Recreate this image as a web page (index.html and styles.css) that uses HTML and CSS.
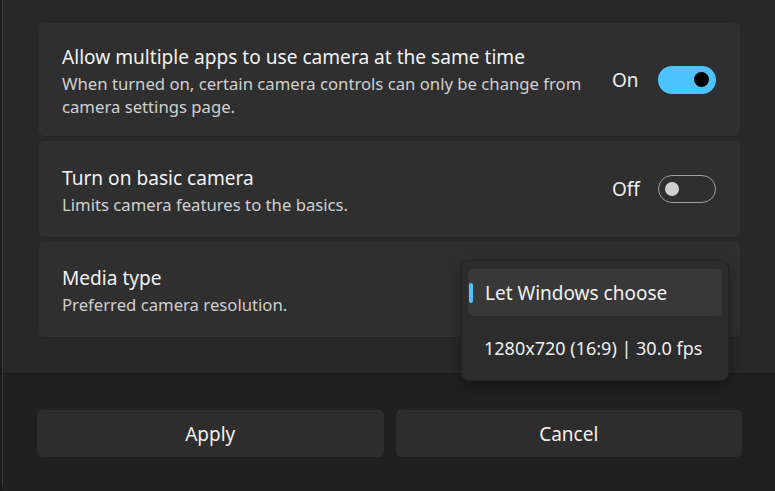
FILE: index.html
```html
<!DOCTYPE html>
<html>
<head>
<meta charset="utf-8">
<link rel="stylesheet" href="styles.css">
</head>
<body>
<div class="dialog">
  <div class="content">
    <div class="card card-tall">
      <div class="text">
        <div class="title">Allow multiple apps to use camera at the same time</div>
        <div class="desc">When turned on, certain camera controls can only be change from<br>camera settings page.</div>
      </div>
      <div class="control">
        <span class="state">On</span>
        <span class="toggle on"><span class="knob"></span></span>
      </div>
    </div>
    <div class="card">
      <div class="text">
        <div class="title">Turn on basic camera</div>
        <div class="desc">Limits camera features to the basics.</div>
      </div>
      <div class="control">
        <span class="state">Off</span>
        <span class="toggle off"><span class="knob"></span></span>
      </div>
    </div>
    <div class="card media">
      <div class="text">
        <div class="title">Media type</div>
        <div class="desc">Preferred camera resolution.</div>
      </div>
      <div class="menu">
        <div class="item selected"><span class="indicator"></span>Let Windows choose</div>
        <div class="item small">1280x720 (16:9) | 30.0 fps</div>
      </div>
    </div>
  </div>
  <div class="footer">
    <button class="btn">Apply</button>
    <button class="btn">Cancel</button>
  </div>
</div>
</body>
</html>
```
FILE: styles.css
```css
html, body {
  margin: 0;
  padding: 0;
  height: 100%;
}
body {
  background: #1b1b1b;
  font-family: "Noto Sans", "Open Sans", sans-serif;
  color: #ffffff;
  overflow: hidden;
}
.dialog {
  margin-left: 2px;
  height: 491px;
  border-left: 1px solid #3a3a3a;
  border-bottom-left-radius: 6px;
  display: flex;
  flex-direction: column;
  background: #202020;
}
.content {
  height: 374px;
  box-sizing: border-box;
  padding: 23px 35px 0 36px;
  background: #282828;
  border-bottom: 1px solid #1a1a1a;
  display: flex;
  flex-direction: column;
  gap: 4px;
}
.card {
  background: #2f2f2f;
  border-radius: 5px;
  height: 97px;
  box-sizing: border-box;
  padding: 0 24px 0 23px;
  display: flex;
  align-items: center;
  justify-content: space-between;
  border-bottom: 1px solid #242424;
  position: relative;
}
.card-tall {
  height: 114px;
}
.media {
  height: 96px;
}
.text {
  padding-top: 2px;
}
.title {
  font-size: 19.1px;
  line-height: 26px;
  color: #f2f2f2;
}
.desc {
  margin-top: 2px;
  font-size: 16.7px;
  line-height: 23px;
  color: #cfcfcf;
}
.control {
  display: flex;
  align-items: center;
  gap: 20px;
}
.state {
  font-size: 19px;
  color: #f0f0f0;
  width: 26px;
}
.toggle {
  width: 58px;
  height: 28px;
  box-sizing: border-box;
  border-radius: 14px;
  display: flex;
  align-items: center;
}
.toggle.on {
  background: #4cc2ff;
  justify-content: flex-end;
  padding-right: 7px;
}
.toggle.on .knob {
  width: 15px;
  height: 15px;
  border-radius: 50%;
  background: #000;
}
.toggle.off {
  border: 1.5px solid #9e9e9e;
  padding-left: 6px;
}
.toggle.off .knob {
  width: 14px;
  height: 14px;
  border-radius: 50%;
  background: #d0d0d0;
}
.menu {
  position: absolute;
  left: 422px;
  top: 18px;
  width: 268px;
  height: 121px;
  box-sizing: border-box;
  background: #2c2c2c;
  border: 1px solid #242424;
  border-radius: 8px;
  padding: 8px 6px;
  box-shadow: 0 6px 16px rgba(0,0,0,0.35);
  display: flex;
  flex-direction: column;
  gap: 6px;
}
.item {
  height: 47px;
  display: flex;
  align-items: center;
  padding-left: 17px;
  font-size: 19px;
  color: #f0f0f0;
  border-radius: 5px;
  position: relative;
}
.item.small {
  font-size: 18px;
  padding-left: 16px;
  padding-top: 2px;
}
.item.selected {
  background: #383838;
}
.indicator {
  position: absolute;
  left: 1px;
  top: 14px;
  width: 4px;
  height: 20px;
  border-radius: 2px;
  background: #4cc2ff;
}
.footer {
  flex: 1;
  display: flex;
  gap: 12px;
  padding: 36px 33px 0 34px;
  background: #202020;
}
.btn {
  flex: 1;
  height: 47px;
  background: #2d2d2d;
  border: none;
  border-top: 1px solid #333;
  border-radius: 5px;
  color: #f0f0f0;
  font-family: inherit;
  font-size: 19px;
  padding-top: 1px;
}
```
